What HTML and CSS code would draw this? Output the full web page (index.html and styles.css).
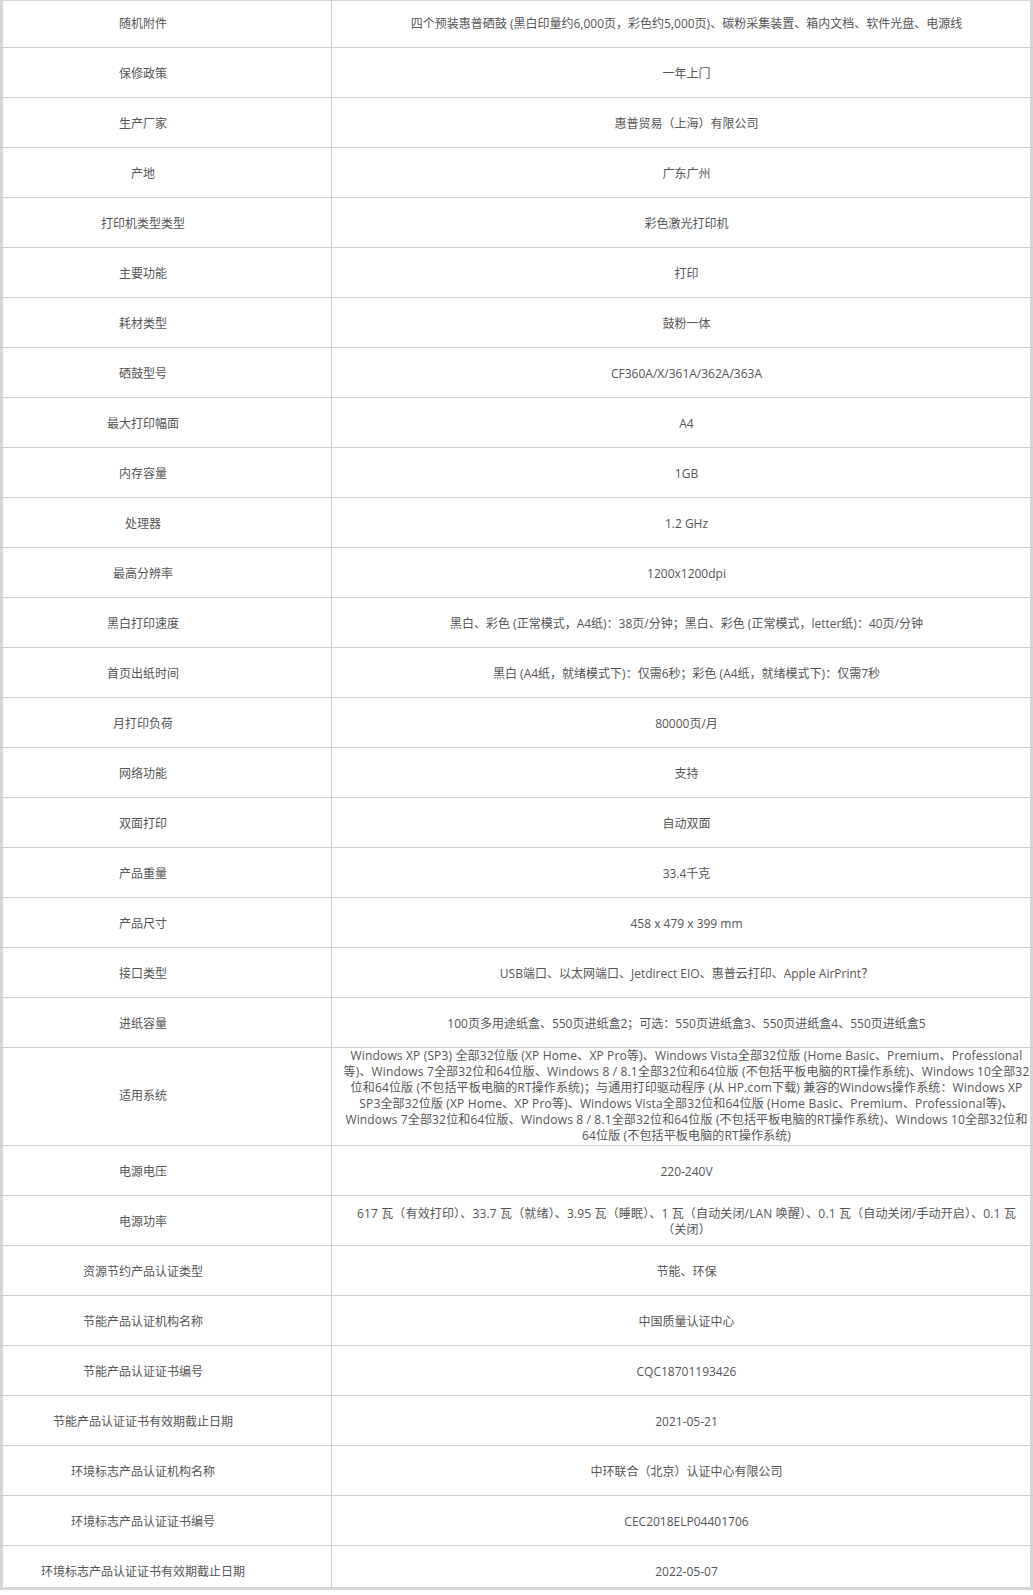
FILE: index.html
```html
<!DOCTYPE html>
<html lang="zh-CN">
<head>
<meta charset="utf-8">
<title>参数</title>
<link rel="stylesheet" href="styles.css">
</head>
<body>
<div class="viewport">
<table class="spec">
<colgroup><col class="c-key"><col class="c-val"></colgroup>
<tbody>
<tr><td class="k">随机附件</td><td class="v">四个预装惠普硒鼓 (黑白印量约6,000页，彩色约5,000页)、碳粉采集装置、箱内文档、软件光盘、电源线</td></tr>
<tr><td class="k">保修政策</td><td class="v">一年上门</td></tr>
<tr><td class="k">生产厂家</td><td class="v">惠普贸易（上海）有限公司</td></tr>
<tr><td class="k">产地</td><td class="v">广东广州</td></tr>
<tr><td class="k">打印机类型类型</td><td class="v">彩色激光打印机</td></tr>
<tr><td class="k">主要功能</td><td class="v">打印</td></tr>
<tr><td class="k">耗材类型</td><td class="v">鼓粉一体</td></tr>
<tr><td class="k">硒鼓型号</td><td class="v">CF360A/X/361A/362A/363A</td></tr>
<tr><td class="k">最大打印幅面</td><td class="v">A4</td></tr>
<tr><td class="k">内存容量</td><td class="v">1GB</td></tr>
<tr><td class="k">处理器</td><td class="v">1.2 GHz</td></tr>
<tr><td class="k">最高分辨率</td><td class="v">1200x1200dpi</td></tr>
<tr><td class="k">黑白打印速度</td><td class="v">黑白、彩色 (正常模式，A4纸)：38页/分钟；黑白、彩色 (正常模式，letter纸)：40页/分钟</td></tr>
<tr><td class="k">首页出纸时间</td><td class="v">黑白 (A4纸，就绪模式下)：仅需6秒；彩色 (A4纸，就绪模式下)：仅需7秒</td></tr>
<tr><td class="k">月打印负荷</td><td class="v">80000页/月</td></tr>
<tr><td class="k">网络功能</td><td class="v">支持</td></tr>
<tr><td class="k">双面打印</td><td class="v">自动双面</td></tr>
<tr><td class="k">产品重量</td><td class="v">33.4千克</td></tr>
<tr><td class="k">产品尺寸</td><td class="v">458 x 479 x 399 mm</td></tr>
<tr><td class="k">接口类型</td><td class="v">USB端口、以太网端口、Jetdirect EIO、惠普云打印、Apple AirPrint？</td></tr>
<tr><td class="k">进纸容量</td><td class="v">100页多用途纸盒、550页进纸盒2；可选：550页进纸盒3、550页进纸盒4、550页进纸盒5</td></tr>
<tr class="tall"><td class="k">适用系统</td><td class="v long">Windows XP (SP3) 全部32位版 (XP Home、XP Pro等)、Windows Vista全部32位版 (Home Basic、Premium、Professional<br>等)、Windows 7全部32位和64位版、Windows 8 / 8.1全部32位和64位版 (不包括平板电脑的RT操作系统)、Windows 10全部32<br>位和64位版 (不包括平板电脑的RT操作系统)；与通用打印驱动程序 (从 HP.com下载) 兼容的Windows操作系统：Windows XP<br>SP3全部32位版 (XP Home、XP Pro等)、Windows Vista全部32位和64位版 (Home Basic、Premium、Professional等)、<br>Windows 7全部32位和64位版、Windows 8 / 8.1全部32位和64位版 (不包括平板电脑的RT操作系统)、Windows 10全部32位和<br>64位版 (不包括平板电脑的RT操作系统)</td></tr>
<tr><td class="k">电源电压</td><td class="v">220-240V</td></tr>
<tr><td class="k">电源功率</td><td class="v long">617 瓦（有效打印）、33.7 瓦（就绪）、3.95 瓦（睡眠）、1 瓦（自动关闭/LAN 唤醒）、0.1 瓦（自动关闭/手动开启）、0.1 瓦<br>（关闭）</td></tr>
<tr><td class="k">资源节约产品认证类型</td><td class="v">节能、环保</td></tr>
<tr><td class="k">节能产品认证机构名称</td><td class="v">中国质量认证中心</td></tr>
<tr><td class="k">节能产品认证证书编号</td><td class="v">CQC18701193426</td></tr>
<tr><td class="k">节能产品认证证书有效期截止日期</td><td class="v">2021-05-21</td></tr>
<tr><td class="k">环境标志产品认证机构名称</td><td class="v">中环联合（北京）认证中心有限公司</td></tr>
<tr><td class="k">环境标志产品认证证书编号</td><td class="v">CEC2018ELP04401706</td></tr>
<tr><td class="k">环境标志产品认证证书有效期截止日期</td><td class="v">2022-05-07</td></tr>
</tbody>
</table>
</div>
</body>
</html>
```
FILE: styles.css
```css
html, body {
  margin: 0;
  padding: 0;
  background: #fff;
}
body {
  font-family: "Open Sans", "Noto Sans CJK SC", sans-serif;
  font-size: 12px;
  color: #555;
  overflow: hidden;
}
.viewport {
  width: 1033px;
  height: 1592px;
  box-shadow: inset 0 0 0 3px #d6d6d6;
}
.spec {
  width: 1033px;
  margin-top: -2px;
  border-collapse: separate;
  border-spacing: 0;
  table-layout: fixed;
}
.c-key { width: 332px; }
.spec tr { height: 50px; }
.spec tr.tall { height: auto; }
.spec td {
  border-bottom: 1px solid #cdcdcd;
  text-align: center;
  vertical-align: middle;
  line-height: 16px;
  padding-top: 4px;
}
.spec tr.tall td { padding-top: 0; }
.spec td.k {
  border-right: 1px solid #cdcdcd;
  padding-right: 45px;
  padding-left: 0;
}
.spec td.v {
  padding-left: 11px;
  padding-right: 3px;
}
.spec td.long {
  white-space: nowrap;
  letter-spacing: 0.15px;
}
```
